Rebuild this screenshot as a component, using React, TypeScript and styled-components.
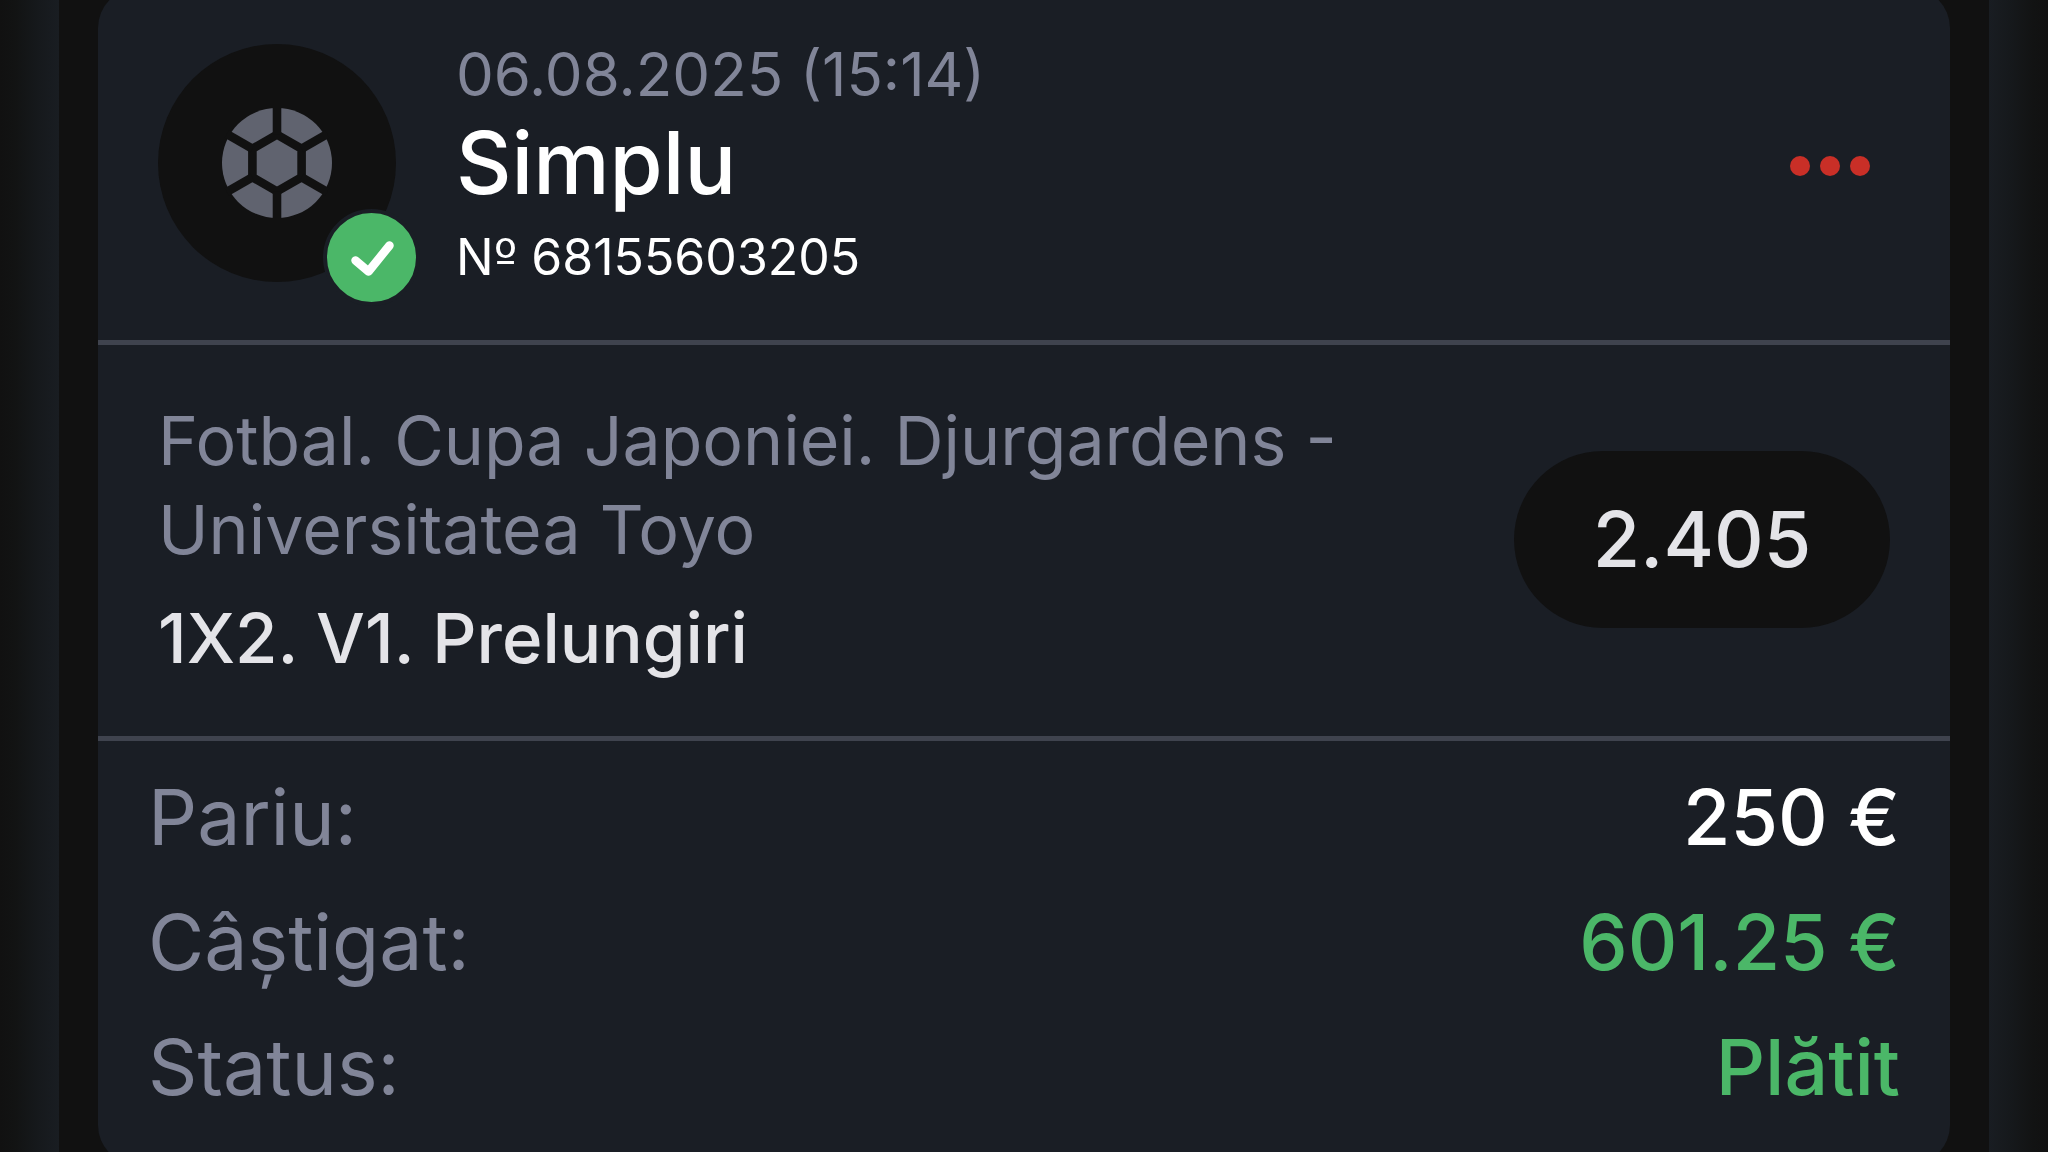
import React from 'react';
import styled, { createGlobalStyle } from 'styled-components';

const color = {
  page: '#111111',
  card: '#1a1e25',
  line: '#3f434e',
  muted: '#818598',
  soft: '#e4e4e8',
  white: '#ffffff',
  green: '#4bb768',
  red: '#c92f27',
  ball: '#60636f',
};

const GlobalStyle = createGlobalStyle`
  * { box-sizing: border-box; }
  body {
    margin: 0;
    background: ${color.page};
    font-family: Inter, Roboto, "Liberation Sans", sans-serif;
    overflow: hidden;
  }
`;

const Page = styled.div`
  display: grid;
  grid-template-columns: 59px minmax(0, 1fr) 59px;
  height: 100vh;
  overflow: hidden;
`;

const Edge = styled.div<{ $to: 'left' | 'right' }>`
  background: linear-gradient(to ${(p) => p.$to}, #191d22 0%, #16191c 35%, #121313 75%, #111111 100%);
`;

const Main = styled.main`
  padding: 0 39px;
`;

const Card = styled.article`
  margin-top: -12px;
  background: ${color.card};
  border-radius: 40px;
`;

const Header = styled.header`
  display: flex;
  align-items: center;
  gap: 60px;
  padding: 55px 80px 57px 60px;
  border-bottom: 5px solid ${color.line};
`;

const Avatar = styled.div`
  position: relative;
  display: grid;
  place-items: center;
  flex: none;
  width: 238px;
  height: 238px;
  border-radius: 50%;
  background: ${color.page};
`;

const Badge = styled.span`
  position: absolute;
  right: -24px;
  bottom: -24px;
  width: 97px;
  height: 97px;
  border: 4px solid ${color.card};
  border-radius: 50%;
  background: ${color.green};
`;

const Heading = styled.div`
  display: flex;
  flex-direction: column;
  flex: 1;
`;

const DateText = styled.time`
  font-size: 60px;
  line-height: 62px;
  color: ${color.muted};
`;

const Title = styled.h1`
  margin: 14px 0 24px;
  font-size: 86px;
  font-weight: 500;
  line-height: 88px;
  color: ${color.white};
`;

const Ticket = styled.span`
  font-size: 50px;
  line-height: 52px;
  color: ${color.white};
`;

/* Inter draws the ordinal sign without its bar. */
const Ordinal = styled.span`
  font-family: "DejaVu Sans", sans-serif;
  line-height: 1;
`;

const MenuButton = styled.button`
  display: flex;
  gap: 10px;
  padding: 6px 0 0;
  border: 0;
  background: none;
  cursor: pointer;
`;

const Dot = styled.span`
  width: 20px;
  height: 20px;
  border-radius: 50%;
  background: ${color.red};
`;

const Event = styled.section`
  display: flex;
  align-items: center;
  justify-content: space-between;
  gap: 60px;
  padding: 51px 60px 53px;
  border-bottom: 5px solid ${color.line};
`;

const EventText = styled.div`
  flex: 1;
  font-size: 68px;
  line-height: 89px;
`;

const Match = styled.p`
  margin: 0 0 20px;
  color: ${color.muted};
`;

const Outcome = styled.p`
  margin: 0;
  font-size: 69px;
  font-weight: 500;
  color: ${color.soft};
`;

const Odds = styled.span`
  flex: none;
  width: 376px;
  border-radius: 90px;
  background: ${color.page};
  color: ${color.soft};
  font-size: 77px;
  font-weight: 500;
  line-height: 177px;
  text-align: center;
`;

const Summary = styled.dl`
  margin: 0;
  padding: 14px 50px 35px;
`;

const Row = styled.div`
  display: flex;
  justify-content: space-between;
  font-size: 77px;
  line-height: 125px;
`;

const Label = styled.dt`
  color: ${color.muted};
`;

const Value = styled.dd<{ $won?: boolean }>`
  margin: 0;
  font-weight: 500;
  color: ${(p) => (p.$won ? color.green : color.white)};
`;

const spokes = [0, 60, 120, 180, 240, 300];

const Ball = () => (
  <svg width="110" height="110" viewBox="-55 -55 110 110" aria-hidden="true">
    <circle r="55" fill={color.ball} />
    <g fill="none" stroke={color.page} strokeWidth="8.6">
      <path d="M0-28.4 24.6-14.2V14.2L0 28.4-24.6 14.2V-14.2Z" />
      {spokes.map((a) => (
        <path key={a} d="M0-28.4V-58" transform={`rotate(${a})`} />
      ))}
    </g>
  </svg>
);

const Check = () => (
  <svg width="89" height="89" viewBox="0 0 89 89" aria-hidden="true">
    <path
      d="M28.5 47.5 41.5 58.5 62.5 32.5"
      fill="none"
      stroke={color.white}
      strokeWidth="8.5"
      strokeLinecap="round"
      strokeLinejoin="round"
    />
  </svg>
);

const rows = [
  { label: 'Pariu:', value: '250 €', won: false },
  { label: 'Câștigat:', value: '601.25 €', won: true },
  { label: 'Status:', value: 'Plătit', won: true },
];

export default function App() {
  return (
    <>
      <GlobalStyle />
      <Page>
        <Edge $to="left" />
        <Main>
          <Card>
            <Header>
              <Avatar>
                <Ball />
                <Badge>
                  <Check />
                </Badge>
              </Avatar>
              <Heading>
                <DateText dateTime="2025-08-06T15:14">06.08.2025 (15:14)</DateText>
                <Title>Simplu</Title>
                <Ticket>
                  N<Ordinal>º</Ordinal> 68155603205
                </Ticket>
              </Heading>
              <MenuButton type="button" aria-label="Opțiuni">
                <Dot />
                <Dot />
                <Dot />
              </MenuButton>
            </Header>
            <Event>
              <EventText>
                <Match>Fotbal. Cupa Japoniei. Djurgardens - Universitatea Toyo</Match>
                <Outcome>1X2. V1. Prelungiri</Outcome>
              </EventText>
              <Odds>2.405</Odds>
            </Event>
            <Summary>
              {rows.map((r) => (
                <Row key={r.label}>
                  <Label>{r.label}</Label>
                  <Value $won={r.won}>{r.value}</Value>
                </Row>
              ))}
            </Summary>
          </Card>
        </Main>
        <Edge $to="right" />
      </Page>
    </>
  );
}
